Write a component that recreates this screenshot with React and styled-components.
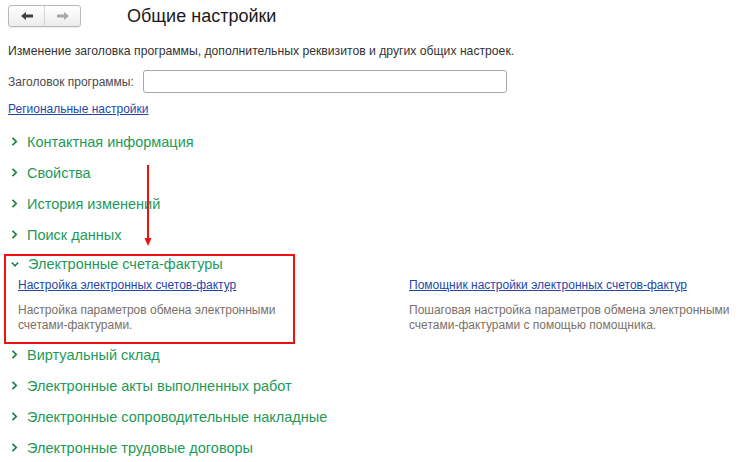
import React from "react";
import styled, { createGlobalStyle } from "styled-components";

const GlobalStyle = createGlobalStyle`
  html, body {
    margin: 0;
    padding: 0;
    background: #fff;
  }
  body {
    font-family: "Liberation Sans", Arial, sans-serif;
    color: #333;
  }
`;

const Page = styled.div`
  position: relative;
  width: 743px;
  height: 462px;
  overflow: hidden;
  padding: 5px 8px 0;
  box-sizing: border-box;
`;

const TopBar = styled.div`
  display: flex;
  align-items: center;
  height: 22px;
`;

const NavGroup = styled.div`
  display: flex;
  width: 73px;
  height: 22px;
  box-sizing: border-box;
  border: 1px solid #b9b9b9;
  border-radius: 3px;
  background: linear-gradient(#ffffff, #ececec);
  box-shadow: 0 1px 1px rgba(0, 0, 0, 0.08);
`;

const NavButton = styled.div`
  flex: 1;
  display: flex;
  align-items: center;
  justify-content: center;
  border-left: ${(p) => (p.$divided ? "1px solid #d4d4d4" : "none")};
  color: ${(p) => (p.$disabled ? "#a8a8a8" : "#404040")};
`;

const Title = styled.h1`
  margin: 0 0 0 46px;
  font-size: 18px;
  font-weight: normal;
  color: #1a1a1a;
  line-height: 22px;
`;

const Intro = styled.p`
  margin: 16px 0 0;
  font-size: 12.2px;
  line-height: 16px;
  color: #333;
`;

const FieldRow = styled.div`
  display: flex;
  align-items: center;
  gap: 9px;
  margin-top: 11px;
`;

const Label = styled.span`
  font-size: 12px;
  color: #4a4a4a;
`;

const Input = styled.div`
  width: 364px;
  height: 23px;
  box-sizing: border-box;
  border: 1px solid #a8a8a8;
  border-radius: 3px;
  background: #fff;
`;

const Link = styled.a`
  display: inline-block;
  align-self: flex-start;
  font-size: 12px;
  line-height: 14px;
  color: #2446ad;
  text-decoration: underline;
  cursor: pointer;
`;

const RegionLink = styled(Link)`
  margin-top: 9px;
`;

const Groups = styled.div`
  display: flex;
  flex-direction: column;
  margin-top: 9px;
`;

const Group = styled.div`
  position: relative;
  display: flex;
  flex-direction: column;
  padding-bottom: ${(p) => (p.$open ? "6px" : "0")};
`;

const GroupHeader = styled.div`
  display: flex;
  align-items: center;
  gap: 9px;
  height: ${(p) => (p.$open ? "28px" : "31px")};
  padding-left: 3px;
  font-size: 14.5px;
  color: #1e9a58;
`;

const Chevron = styled.svg`
  flex: none;
  width: ${(p) => (p.$open ? "8px" : "7px")};
  height: 9px;
`;

const GroupBody = styled.div`
  display: grid;
  grid-template-columns: 280px 330px;
  column-gap: 111px;
  padding-left: 10px;
`;

const Column = styled.div`
  display: flex;
  flex-direction: column;
  gap: 11px;
`;

const Note = styled.div`
  font-size: 12px;
  line-height: 15px;
  color: #7a7068;
`;

const Highlight = styled.div`
  position: absolute;
  left: -4px;
  top: 4px;
  width: 291px;
  height: 90px;
  box-sizing: border-box;
  border: 2px solid #f01010;
  pointer-events: none;
`;

const Pointer = styled.svg`
  position: absolute;
  left: 143px;
  top: 165px;
`;

function ArrowIcon({ left }) {
  return (
    <svg width="14" height="10" viewBox="0 0 14 10">
      {left ? (
        <path d="M1 5 L6 1 L6 3.5 L13 3.5 L13 6.5 L6 6.5 L6 9 Z" fill="currentColor" />
      ) : (
        <path d="M13 5 L8 1 L8 3.5 L1 3.5 L1 6.5 L8 6.5 L8 9 Z" fill="currentColor" />
      )}
    </svg>
  );
}

function GroupItem({ title, open, children }) {
  return (
    <Group $open={open}>
      <GroupHeader $open={open}>
        {open ? (
          <Chevron $open viewBox="0 0 8 9">
            <path d="M0.8 2.5 L4 5.8 L7.2 2.5" fill="none" stroke="#17804a" strokeWidth="1.5" />
          </Chevron>
        ) : (
          <Chevron viewBox="0 0 7 9">
            <path d="M1.5 0.8 L5.2 4.5 L1.5 8.2" fill="none" stroke="#17804a" strokeWidth="1.7" />
          </Chevron>
        )}
        <span>{title}</span>
      </GroupHeader>
      {children}
    </Group>
  );
}

const before = ["Контактная информация", "Свойства", "История изменений", "Поиск данных"];
const after = [
  "Виртуальный склад",
  "Электронные акты выполненных работ",
  "Электронные сопроводительные накладные",
  "Электронные трудовые договоры",
];

export default function App() {
  return (
    <>
      <GlobalStyle />
      <Page>
        <TopBar>
          <NavGroup>
            <NavButton>
              <ArrowIcon left />
            </NavButton>
            <NavButton $divided $disabled>
              <ArrowIcon />
            </NavButton>
          </NavGroup>
          <Title>Общие настройки</Title>
        </TopBar>

        <Intro>
          Изменение заголовка программы, дополнительных реквизитов и других общих настроек.
        </Intro>

        <FieldRow>
          <Label>Заголовок программы:</Label>
          <Input />
        </FieldRow>

        <RegionLink>Региональные настройки</RegionLink>

        <Groups>
          {before.map((t) => (
            <GroupItem key={t} title={t} />
          ))}
          <GroupItem title="Электронные счета-фактуры" open>
            <GroupBody>
              <Column>
                <Link>Настройка электронных счетов-фактур</Link>
                <Note>Настройка параметров обмена электронными счетами-фактурами.</Note>
              </Column>
              <Column>
                <Link>Помощник настройки электронных счетов-фактур</Link>
                <Note>
                  Пошаговая настройка параметров обмена электронными счетами-фактурами с
                  помощью помощника.
                </Note>
              </Column>
            </GroupBody>
            <Highlight />
          </GroupItem>
          {after.map((t) => (
            <GroupItem key={t} title={t} />
          ))}
        </Groups>

        <Pointer width="10" height="82" viewBox="0 0 10 82">
          <line x1="5" y1="0" x2="5" y2="74" stroke="#f01010" strokeWidth="2" />
          <path d="M1.5 73 L8.5 73 L5 81 Z" fill="#f01010" />
        </Pointer>
      </Page>
    </>
  );
}
